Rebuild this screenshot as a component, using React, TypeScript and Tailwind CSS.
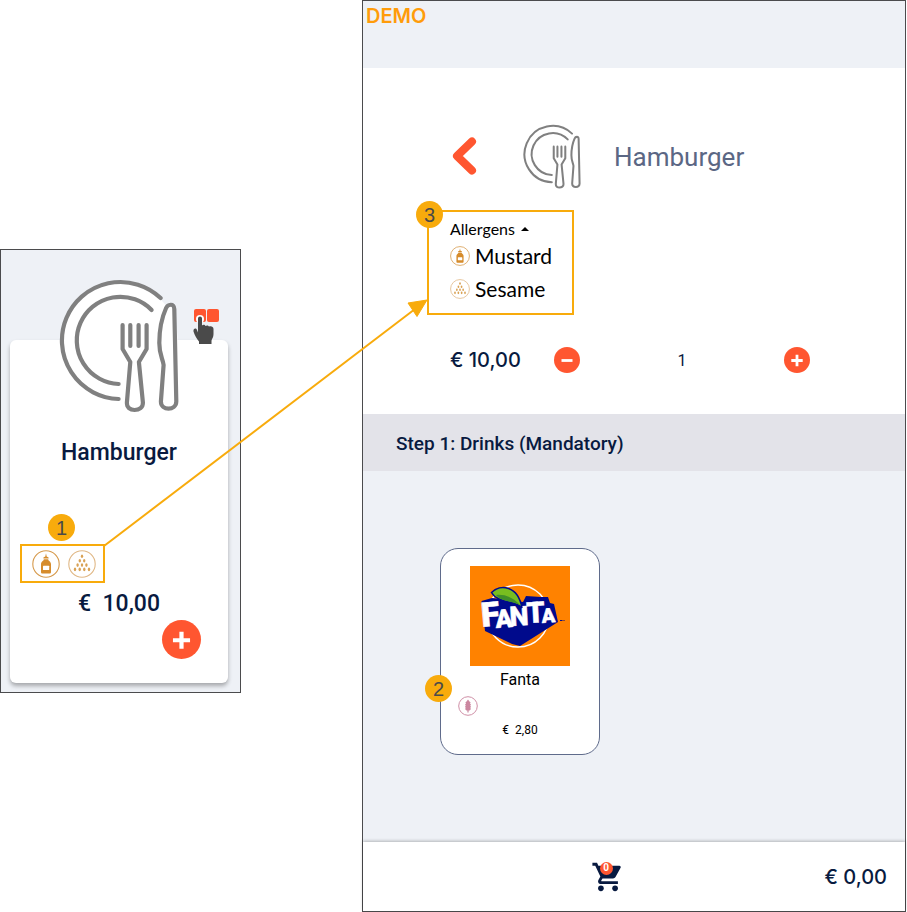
import { useState } from "react";
import type { ReactNode } from "react";

function PlateIcon({ className }: { className: string }) {
  return (
    <svg viewBox="0.4 0 120 135" className={className} fill="none" stroke="#808080" strokeWidth="4.2" strokeLinecap="round" strokeLinejoin="round">
      <circle cx="62" cy="62" r="57" fill="#fff" stroke="none" />
      <path d="M102 20A58.5 58.5 0 1 0 60 121" />
      <path d="M93 32A43.6 43.6 0 1 0 60 106" />
      <path d="M64 47V71L71.7 84L68.3 124.5C68 129.5 71.5 132 76 132C80.5 132 84.6 129.5 84.3 124.5L80.3 84L88 71V47" fill="#fff" />
      <path d="M71.7 47V68M80 47V68" />
      <path d="M107.5 30C109 26.5 115.5 24.5 115.7 31L117.7 123.5C117.5 133 102.3 133 102.3 123.5L105 87C104 80 100.7 77 100.7 65C100.7 53 103 40 107.5 30Z" fill="#fff" />
    </svg>
  );
}

function MustardIcon({ className }: { className: string }) {
  return (
    <svg viewBox="0 0 28 28" className={className} role="img" aria-label="Mustard">
      <circle cx="14" cy="14" r="13.2" fill="#fff" stroke="#d69a4c" strokeWidth="1.1" />
      <path d="M13.3 6.5L14 3.3L14.7 6.5L16.6 7.4V8.5H11.4V7.4Z" fill="#d68c2c" />
      <path d="M11.8 9.2H16.2C16.2 11 19 11.3 19 14V22C19 23 18.4 23.5 17.5 23.5H10.5C9.6 23.5 9 23 9 22V14C9 11.3 11.8 11 11.8 9.2Z" fill="#d68c2c" />
      <rect x="11" y="15.8" width="6.2" height="4.3" rx=".5" fill="#fff" />
    </svg>
  );
}

const seeds = [
  [14, 6.3],
  [11.8, 10.8], [16.2, 10.8],
  [9.6, 15.1], [14, 15.1], [18.4, 15.1],
  [7, 19.4], [11.7, 19.4], [16.3, 19.4], [21, 19.4],
];

function SesameIcon({ className }: { className: string }) {
  return (
    <svg viewBox="0 0 28 28" className={className} role="img" aria-label="Sesame">
      <circle cx="14" cy="14" r="13.2" fill="#fff" stroke="#e0b886" strokeWidth="1.1" />
      {seeds.map(([x, y]) => (
        <ellipse key={`${x}-${y}`} cx={x} cy={y} rx="1.2" ry="1.8" fill="#d9a255" />
      ))}
    </svg>
  );
}

function GlutenIcon({ className }: { className: string }) {
  return (
    <svg viewBox="0 0 20 20" className={className} role="img" aria-label="Gluten">
      <circle cx="10" cy="10" r="9.3" fill="#fff" stroke="#cf8fa6" strokeWidth="1" />
      <path d="M10 3.5L11.5 5.5L12.6 6.5L12 7.7L13 8.5L12.2 9.8L13 10.7L12.2 12L13 13L11.5 14.5H10.6V16.5H9.4V14.5H8.5L7 13L7.8 12L7 10.7L7.8 9.8L7 8.5L8 7.7L7.4 6.5L8.5 5.5Z" fill="#cb87a0" />
    </svg>
  );
}

function FantaLogo() {
  return (
    <svg viewBox="0 0 100 100" className="size-[100px]" role="img" aria-label="Fanta logo">
      <rect width="100" height="100" fill="#ff8200" />
      <circle cx="48" cy="50" r="31" fill="none" stroke="#fff" strokeWidth="1.5" />
      <path d="M11.5 35L22 32L53 36L56 30L71 31L78 31L80 37L84 38L88 56L50 80L42 78L15 65Z" fill="#000a8c" />
      <g fill="#fff" stroke="#fff" strokeWidth=".5" fontFamily="Roboto, sans-serif" fontWeight="900">
        <text x="12" y="61" fontSize="34" transform="rotate(-5 12 61)">F</text>
        <text x="26" y="62" fontSize="25" transform="rotate(-4 26 62)">A</text>
        <text x="40" y="60" fontSize="27" transform="rotate(-3 40 60)">N</text>
        <text x="57" y="57" fontSize="29" transform="rotate(-3 57 57)">T</text>
        <text x="72" y="57" fontSize="20" transform="rotate(-4 72 57)">A</text>
      </g>
      <path d="M21.5 26.5C30 18 48 19 52 42C46 34 28 38 21.5 26.5Z" fill="#78be20" stroke="#000a8c" strokeWidth="1.5" />
      <path d="M26 29C34 28 43 31 50 39C42 35 32 36 26 29Z" fill="#3f8f29" />
      <path d="M90 54.5H92.5M93.5 54.5H94.5" stroke="#000a8c" />
    </svg>
  );
}

function TapIcon() {
  return (
    <svg viewBox="0 0 26 37" className="h-[37px] w-[26px]" aria-hidden="true">
      <rect x="1" y="1" width="12" height="13" rx="2" fill="#ff5630" />
      <rect x="14" y="1" width="12" height="13" rx="2" fill="#ff5630" />
      <circle cx="7" cy="11" r="4" fill="#fff" />
      <path d="M5 10.5C5 7.8 9 7.8 9 10.5V17.5C10 16.5 12 16.7 12.5 18C13.5 17 15.5 17.3 16 18.5C17.5 17.8 20.5 18 20.5 21V26C20.5 30 18.5 31 18.5 33.5V36H6V33.5C4 31 1.5 27 .5 23.5C0 20.5 3 19.5 4 22L5 24.5Z" fill="#4a4a4a" />
    </svg>
  );
}

function CartIcon() {
  return (
    <svg viewBox="0 0 24 24" className="size-[34px]" fill="currentColor" aria-hidden="true">
      <path d="M1 2V4H3L6.6 11.6L5.25 14.04C4.5 15.4 5.5 17 7 17H19V15H7.42C7.2 15 7.1 14.8 7.2 14.63L8.1 13H15.55C16.3 13 16.96 12.6 17.3 11.97L20.9 5.5C21.25 4.8 20.8 4 20 4H5.21L4.27 2Z" />
      <circle cx="7" cy="20" r="2" />
      <circle cx="17" cy="20" r="2" />
    </svg>
  );
}

function RoundButton({ label, minus, className, onClick }: { label: string; minus?: boolean; className: string; onClick?: () => void }) {
  return (
    <button type="button" aria-label={label} onClick={onClick} className={`shrink-0 rounded-full bg-[#ff5630] ${className}`}>
      <svg viewBox="0 0 26 26" stroke="#fff" strokeWidth="2.8">
        <path d={minus ? "M7.5 13.5H18.5" : "M7.3 13.5H18.7M13 7.8V19.2"} />
      </svg>
    </button>
  );
}

function Badge({ children, className }: { children: ReactNode; className: string }) {
  return (
    <span className={`absolute flex size-[27px] items-center justify-center rounded-full bg-[#f8ab0c] font-['Liberation_Sans',sans-serif] text-xl text-[#4a4a4a] ${className}`}>
      {children}
    </span>
  );
}

export default function App() {
  const [quantity, setQuantity] = useState(1);

  return (
    <div className="relative flex min-h-screen items-stretch bg-white pr-px font-['Roboto',sans-serif] text-[#081a40]">
      {/* Product card */}
      <section className="relative mt-[249px] w-[241px] shrink-0 self-start border border-[#4b4b4d] bg-[#eef1f6] pt-[90px] pr-3 pb-[9px] pl-[9px]">
        <div className="flex flex-col rounded-md bg-white pb-6 shadow-[0_3px_4px_rgba(0,0,0,0.3)]">
          <PlateIcon className="-mt-[62px] h-[135px] w-[120px] self-center" />
          <h2 className="mt-6 text-center text-[23px] leading-8 font-medium">Hamburger</h2>
          <div className="relative mt-[75px] ml-2.5 flex h-[39px] w-[85px] items-center justify-between border-2 border-[#f8ab0c] pr-[7px] pl-2.5">
            <MustardIcon className="size-7" />
            <SesameIcon className="size-7" />
            <Badge className="-top-[32px] left-[26px]">1</Badge>
          </div>
          <p className="mt-[5px] text-center text-[23px] leading-8 font-medium">€&nbsp; 10,00</p>
          <RoundButton label="Add Hamburger" className="mr-[27px] size-[39px] self-end" />
        </div>
        <div className="absolute top-[58px] right-[21px]">
          <TapIcon />
        </div>
      </section>

      {/* Product detail */}
      <main className="ml-[121px] flex min-w-0 flex-1 flex-col border border-[#4b4b4d] bg-[#eef1f6]">
        <header className="h-[67px] pt-[3px] pl-[3px] font-['Inter',sans-serif] text-xl leading-6 font-semibold text-[#ff9c0a]">DEMO</header>

        <div className="bg-white pt-14 pb-[41px] pl-[87px]">
          <div className="flex items-center">
            <button type="button" aria-label="Back" className="mr-[46px]">
              <svg viewBox="0 0 27 40" className="h-10 w-[27px]" fill="none" stroke="#ff5630" strokeWidth="8" strokeLinecap="round" strokeLinejoin="round">
                <path d="M22 4.5L7 19L22 33.5" />
              </svg>
            </button>
            <PlateIcon className="h-[65px] w-[58px]" />
            <h1 className="ml-[33px] text-[26px] leading-8 text-[#5b6784]">Hamburger</h1>
          </div>

          <div className="relative mt-[21px] -ml-[23px] h-[105px] w-[147px] border-2 border-[#f8ab0c] pt-1.5 pl-[21px] font-['Lato',sans-serif] text-black">
            <button type="button" aria-expanded="true" className="flex items-center gap-1.5 text-base leading-[21px]">
              Allergens
              <svg viewBox="0 0 8 4" className="h-1 w-2">
                <path d="M0 4L4 0L8 4Z" />
              </svg>
            </button>
            <ul className="text-[21px] leading-[33px]">
              <li className="flex items-center gap-[5px]">
                <MustardIcon className="size-5" />
                Mustard
              </li>
              <li className="flex items-center gap-[5px]">
                <SesameIcon className="size-5" />
                Sesame
              </li>
            </ul>
            <Badge className="-top-[11px] -left-[13px]">3</Badge>
          </div>

          <div className="mt-8 flex w-[360px] items-center">
            <span className="w-[104px] font-['Inter',sans-serif] text-xl leading-6 font-medium">€ 10,00</span>
            <RoundButton label="Less" minus className="size-[26px]" onClick={() => setQuantity(Math.max(1, quantity - 1))} />
            <output className="flex-1 pt-0.5 text-center text-base leading-6">{quantity}</output>
            <RoundButton label="More" className="size-[26px]" onClick={() => setQuantity(quantity + 1)} />
          </div>
        </div>

        <h2 className="bg-[#e3e3e9] pt-[17px] pb-[15px] pl-[33px] text-[19px] leading-[25px] font-medium">Step 1: Drinks (Mandatory)</h2>

        <div className="flex-1 px-[77px] pt-[77px] pb-[86px]">
          <article className="relative flex h-[207px] w-40 flex-col items-center rounded-[18px] border border-[#5f6b8b] bg-white pt-[17px]">
            <FantaLogo />
            <h3 className="mt-1 text-base leading-5 text-black">Fanta</h3>
            <GlutenIcon className="mt-1.5 ml-[17px] size-5 self-start" />
            <p className="mt-1.5 text-xs leading-4 text-black">€&nbsp; 2,80</p>
            <Badge className="top-[126px] -left-[16px]">2</Badge>
          </article>
        </div>

        <footer className="grid h-[69px] grid-cols-[13fr_auto_15fr] items-center bg-white pr-[18px] shadow-[0_-1px_3px_rgba(0,0,0,0.25)]">
          <button type="button" aria-label="Cart" className="relative col-start-2">
            <CartIcon />
            <span className="absolute top-0.5 left-[9px] flex size-[13px] items-center justify-center rounded-full bg-[#ff5630] text-[10px] leading-3 font-bold text-white">0</span>
          </button>
          <span className="justify-self-end font-['Inter',sans-serif] text-xl leading-6 font-medium">€ 0,00</span>
        </footer>
      </main>

      {/* Arrow between the two allergen boxes */}
      <svg viewBox="0 0 326 248" className="pointer-events-none absolute top-[299px] left-[103px] h-[248px] w-[326px]" aria-hidden="true">
        <path d="M1 247L312 10" stroke="#f8ab0c" strokeWidth="2" />
        <path d="M324 1L314 17.5L305 4Z" fill="#f8ab0c" stroke="#f8ab0c" />
      </svg>
    </div>
  );
}
